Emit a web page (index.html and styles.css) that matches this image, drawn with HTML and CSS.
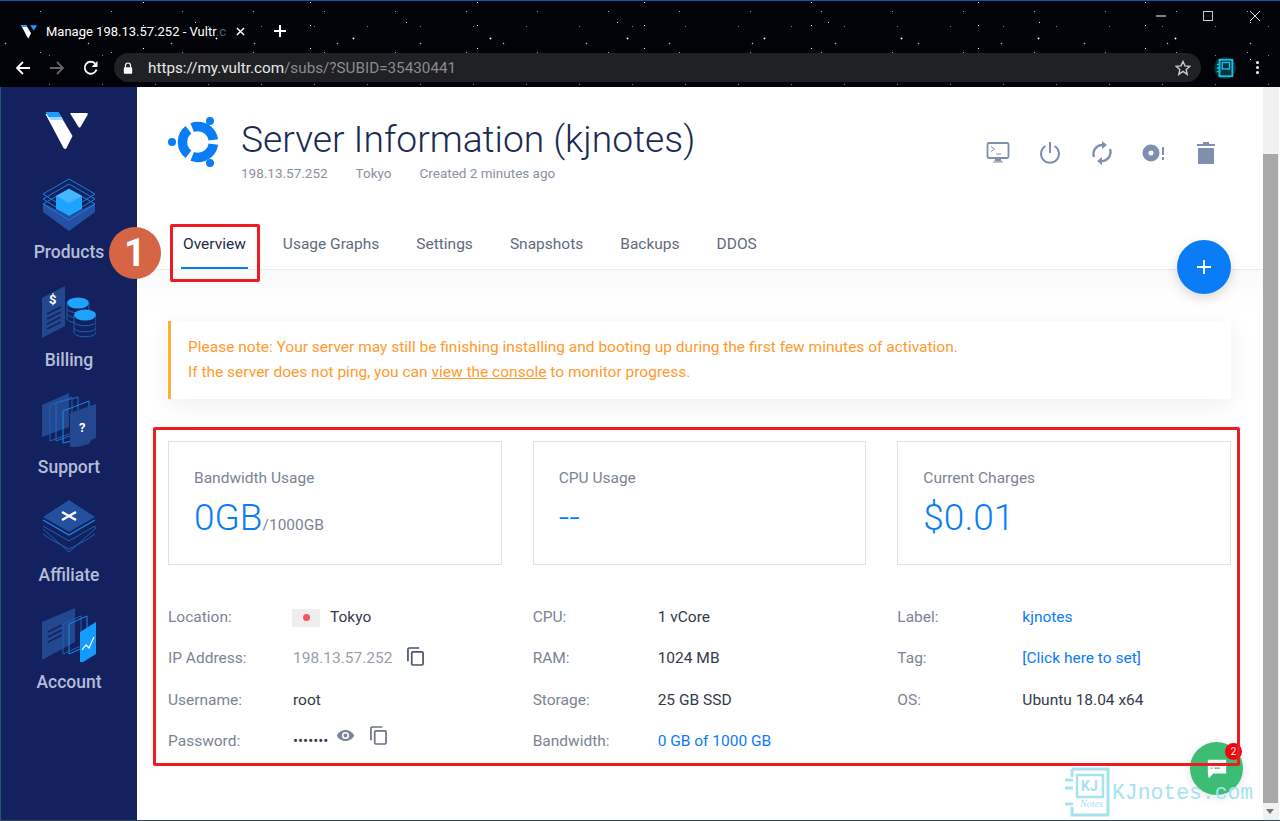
FILE: index.html
```html
<!DOCTYPE html>
<html lang="en">
<head>
    <meta charset="UTF-8">
    <meta name="viewport" content="width=device-width, initial-scale=1.0">
    <title>Manage 198.13.57.252 - Vultr.com</title>
    <link rel="stylesheet" href="styles.css">
</head>
<body>
<div class="window">
    <div class="chrome">
        <div class="tab-row">
            <svg class="favicon" viewBox="0 0 43 38"><path d="M0 2h14l13 22-6 12q-1 2-3 0z" fill="#fff"/><path d="M0 2h14l3 5H3z" fill="#1e9bff"/><path d="M25 2h16q2 0 1 2l-7 11q-1 1-2 0L25 3z" fill="#1e9bff"/></svg>
            <span class="tab-title">Manage 198.13.57.252 - Vultr<span class="fade">.c</span></span>
            <svg class="tab-close" viewBox="0 0 10 10"><path d="M1 1l8 8M9 1l-8 8" stroke="#fff" stroke-width="1.6"/></svg>
            <svg class="tab-new" viewBox="0 0 14 14"><path d="M7 1v12M1 7h12" stroke="#fff" stroke-width="2"/></svg>
            <div class="win-btns">
                <svg viewBox="0 0 12 12"><path d="M1 6h10" stroke="#fff"/></svg>
                <svg viewBox="0 0 12 12"><rect x="1.5" y="1.5" width="9" height="9" fill="none" stroke="#ccc"/></svg>
                <svg viewBox="0 0 12 12"><path d="M1 1l10 10M11 1L1 11" stroke="#ddd"/></svg>
            </div>
        </div>
        <div class="addr-row">
            <svg class="nav-arrow" viewBox="0 0 16 16"><path d="M15 8H2M8 2L2 8l6 6" fill="none" stroke="#fff" stroke-width="1.8"/></svg>
            <svg class="nav-arrow" viewBox="0 0 16 16"><path d="M1 8h13M8 2l6 6-6 6" fill="none" stroke="#666" stroke-width="1.8"/></svg>
            <svg class="nav-arrow" viewBox="0 0 16 16"><path d="M13.5 9.5A6 6 0 1 1 12 3.5" fill="none" stroke="#fff" stroke-width="1.8"/><path d="M14.5 1v6h-6z" fill="#fff"/></svg>
            <div class="addr-bar">
                <svg class="lock" viewBox="0 0 12 14"><path d="M3 6V4a3 3 0 0 1 6 0v2" fill="none" stroke="#fff" stroke-width="1.4"/><rect x="1" y="6" width="10" height="8" rx="1" fill="#fff"/></svg>
                <span class="url"><b>https://my.vultr.com</b>/subs/?SUBID=35430441</span>
                <svg class="star" viewBox="0 0 16 16"><path d="M8 1.5l2 4.4 4.7.5-3.5 3.2 1 4.7L8 11.4l-4.2 2.9 1-4.7L1.3 6.4 6 5.900z" fill="none" stroke="#ccc" stroke-width="1.400"/></svg>
            </div>
            <svg class="ext" viewBox="0 0 24 24"><circle cx="12" cy="12" r="12" fill="#06303c"/><rect x="6" y="3" width="14" height="18" fill="none" stroke="#13c3e6" stroke-width="2"/><rect x="9" y="6" width="8" height="7" fill="none" stroke="#13c3e6" stroke-width="1.500"/><path d="M3 8h4M3 12h4M3 16h4" stroke="#13c3e6" stroke-width="1.500"/></svg>
            <div class="menu-dots"><i></i><i></i><i></i></div>
        </div>
    </div>

    <div class="main">
        <nav class="sidebar">
            <svg class="logo" viewBox="0 0 43 38"><path d="M0 2h14l13 22-6 12q-1 2-3 0z" fill="#fff"/><path d="M0 0h13l3 5H3z" fill="#1e9bff"/><path d="M3 5h13l1.500 3H5z" fill="#a8d4ff"/><path d="M25 1h16q2 0 1 2l-7 12q-1 1-2 0L25 2z" fill="#fff"/></svg>
            <a class="nav-item">
                <svg viewBox="0 0 54 56"><path d="M1 36v-9l26 13 26-13v9L27 55z" fill="#2451a3"/><path d="M27 3l26 15-26 16L1 18z" fill="none" stroke="#1b7fd8"/><path d="M27 8l26 15-26 16L1 23z" fill="none" stroke="#1b7fd8"/><path d="M27 13l26 15-26 16L1 28z" fill="none" stroke="#1b7fd8"/><path d="M27 13l13 7v13l-13 7-13-7V20z" fill="#1ea4ff"/><path d="M27 13l13 7-13 7-13-7z" fill="#45b6ff"/></svg>
                <span>Products</span>
            </a>
            <a class="nav-item">
                <svg viewBox="0 0 54 56"><path d="M0 14l23-12v40L0 54z" fill="#24488f"/><path d="M5 30l14-7M5 35l14-7M5 40l14-7M5 45l14-7" stroke="#14215f" stroke-width="1.500"/><text x="7" y="20" class="doc-mark">$</text><ellipse cx="36" cy="19" rx="11" ry="5.500" fill="#1ea4ff"/><path d="M25 19v16c2 5 20 5 22 0V19" fill="none" stroke="#1d5fb0"/><path d="M25 25c2 5 20 5 22 0M25 30c2 5 20 5 22 0" fill="none" stroke="#1d5fb0"/><path d="M32 31v18c2 5 20 5 22 0V31" fill="#14215f" stroke="#1d5fb0"/><path d="M32 38c2 5 20 5 22 0M32 44c2 5 20 5 22 0" fill="none" stroke="#1d5fb0"/><ellipse cx="43" cy="31" rx="11" ry="5.500" fill="#1ea4ff"/></svg>
                <span>Billing</span>
            </a>
            <a class="nav-item">
                <svg viewBox="0 0 54 56"><path d="M0 14l27-12v34L0 46z" fill="#24488f"/><path d="M8 14l22-8v36L8 50z" fill="none" stroke="#1d5fb0"/><path d="M14 12l22-6v36l-22 8z" fill="none" stroke="#1b6fc8"/><path d="M21 20l26-10v36l-26 6z" fill="none" stroke="#1a8be6"/><path d="M28 22l26-9v34l-5 2-2 4-19 5z" fill="#24488f"/><text x="37" y="41" class="doc-mark">?</text></svg>
                <span>Support</span>
            </a>
            <a class="nav-item">
                <svg viewBox="0 0 54 56"><path d="M1 27l26 15 26-15v3L27 53 1 30" fill="none" stroke="#1d5fb0"/><path d="M1 35c8 6 18 11 26 15 8-4 18-9 26-15" fill="none" stroke="#1d5fb0"/><path d="M1 21l26 15 26-15" fill="none" stroke="#1b8be8" stroke-width="1.400"/><path d="M27 1l26 17-26 15L1 18z" fill="#24509f"/><path d="M20 13l14 8M34 13l-14 8" stroke="#fff" stroke-width="2.500"/></svg>
                <span>Affiliate</span>
            </a>
            <a class="nav-item">
                <svg viewBox="0 0 54 56"><path d="M0 16l33-14v34L0 54z" fill="#24488f"/><path d="M6 26l14-7M6 31l14-7M6 36l14-7" stroke="#14215f" stroke-width="1.500"/><path d="M21 18l18-8v30l-18 8z" fill="none" stroke="#1d5fb0"/><path d="M27 18l18-8v30l-18 8z" fill="none" stroke="#1b8be8"/><path d="M38 26l16-10v32l-16 10z" fill="#149bff"/><path d="M40 44l4-5 3 3 5-11" fill="none" stroke="#fff" stroke-width="1.200"/></svg>
                <span>Account</span>
            </a>
        </nav>

        <main class="content">
            <header class="server-head">
                <svg class="ubuntu" viewBox="0 0 50 52">
                    <circle cx="30" cy="26" r="15.500" pathLength="360" fill="none" stroke="#0a7cf5" stroke-width="9.500" stroke-dasharray="104 16" stroke-dashoffset="-8"/>
                    <circle cx="4" cy="26" r="4" fill="#0a7cf5"/>
                    <circle cx="42" cy="5" r="4" fill="#0a7cf5"/>
                    <circle cx="42" cy="47" r="4" fill="#0a7cf5"/>
                </svg>
                <div class="head-text">
                    <h1>Server Information (kjnotes)</h1>
                    <div class="head-meta"><span>198.13.57.252</span><span>Tokyo</span><span>Created 2 minutes ago</span></div>
                </div>
                <div class="head-actions">
                    <svg viewBox="0 0 24 24"><rect x="1.500" y="2" width="21" height="15" rx="1.500" fill="none" stroke="#7f8fb0" stroke-width="1.800"/><path d="M5 5.500l3.500 2.500L5 10.500M10 13h5" fill="none" stroke="#7f8fb0"/><path d="M10 17h4l1 3h-6zM7 21h10" fill="#7f8fb0" stroke="#7f8fb0"/></svg>
                    <svg viewBox="0 0 24 24"><path d="M7.500 5a9 9 0 1 0 9 0M12 1v11" fill="none" stroke="#7f8fb0" stroke-width="2"/></svg>
                    <svg viewBox="0 0 24 24"><path d="M4 16A9 9 0 0 1 13 4M20 8a9 9 0 0 1-9 12" fill="none" stroke="#7f8fb0" stroke-width="2.400"/><path d="M12 0l5 4-5 4zM12 16l-5 4 5 4z" fill="#7f8fb0"/></svg>
                    <svg viewBox="0 0 24 24"><circle cx="9" cy="12" r="5.500" fill="none" stroke="#7f8fb0" stroke-width="6"/><path d="M21 6v8M21 16v3" stroke="#7f8fb0" stroke-width="2"/></svg>
                    <svg viewBox="0 0 24 24"><path d="M4 7h16v16H4zM3 3h18v2H3zM9 1h6v2H9z" fill="#7f8fb0"/></svg>
                </div>
            </header>

            <ul class="tabs">
                <li class="active">Overview</li>
                <li>Usage Graphs</li>
                <li>Settings</li>
                <li>Snapshots</li>
                <li>Backups</li>
                <li>DDOS</li>
            </ul>

            <div class="page">
                <div class="notice">
                    <p>Please note: Your server may still be finishing installing and booting up during the first few minutes of activation.</p>
                    <p>If the server does not ping, you can <a>view the console</a> to monitor progress.</p>
                </div>

                <div class="cards">
                    <div class="card"><div class="card-label">Bandwidth Usage</div><div class="card-value">0GB<small>/1000GB</small></div></div>
                    <div class="card"><div class="card-label">CPU Usage</div><div class="card-value">--</div></div>
                    <div class="card"><div class="card-label">Current Charges</div><div class="card-value">$0.01</div></div>
                </div>

                <div class="details">
                    <dl>
                        <dt>Location:</dt><dd><span class="flag"><i></i></span>Tokyo</dd>
                        <dt>IP Address:</dt><dd class="muted">198.13.57.252<svg class="copy" viewBox="0 0 18 20"><path d="M13 1H2.500A1.500 1.500 0 0 0 1 2.500V15" fill="none" stroke="#4a5468" stroke-width="1.800"/><rect x="5" y="5" width="12" height="14" rx="1.200" fill="none" stroke="#4a5468" stroke-width="1.800"/></svg></dd>
                        <dt>Username:</dt><dd>root</dd>
                        <dt>Password:</dt><dd class="pass"><span class="dots">•••••••</span><svg class="eye" viewBox="0 0 24 16"><path d="M12 1C7 1 3 4 1 8c2 4 6 7 11 7s9-3 11-7c-2-4-6-7-11-7zm0 11.500a4.500 4.500 0 1 1 0-9 4.500 4.500 0 0 1 0 9zm0-7a2.500 2.500 0 1 0 0 5 2.500 2.500 0 0 0 0-5z" fill="#7d8596"/></svg><svg class="copy" viewBox="0 0 18 20"><path d="M13 1H2.500A1.500 1.500 0 0 0 1 2.500V15" fill="none" stroke="#6b7384" stroke-width="1.800"/><rect x="5" y="5" width="12" height="14" rx="1.200" fill="none" stroke="#6b7384" stroke-width="1.800"/></svg></dd>
                    </dl>
                    <dl>
                        <dt>CPU:</dt><dd>1 vCore</dd>
                        <dt>RAM:</dt><dd>1024 MB</dd>
                        <dt>Storage:</dt><dd>25 GB SSD</dd>
                        <dt>Bandwidth:</dt><dd class="link">0 GB of 1000 GB</dd>
                    </dl>
                    <dl>
                        <dt>Label:</dt><dd class="link">kjnotes</dd>
                        <dt>Tag:</dt><dd class="link">[Click here to set]</dd>
                        <dt>OS:</dt><dd>Ubuntu 18.04 x64</dd>
                    </dl>
                </div>
            </div>
        </main>

        <div class="scrollbar">
            <div class="scroll-thumb"></div>
            <i class="scroll-arrow"></i>
        </div>
    </div>

    <div class="fab"><svg viewBox="0 0 16 16"><path d="M8 1v14M1 8h14" stroke="#fff" stroke-width="1.800"/></svg></div>
    <div class="chat">
        <svg viewBox="0 0 24 24"><path d="M2 2h20v15H8l-5 5-1-5z" fill="#fff"/><path d="M5 7h2M9 7h9M5 11h2M9 11h6" stroke="#3dbd73" stroke-width="1.500"/></svg>
        <span class="chat-badge">2</span>
    </div>
    <div class="mark-box mark-tab"></div>
    <div class="mark-box mark-info"></div>
    <div class="callout">1</div>
    <div class="watermark">
        <svg viewBox="0 0 46 50"><path d="M8 2h36v46H8v-8M8 2v8" fill="none" stroke="#a5e3ef" stroke-width="3"/><rect x="13" y="8" width="26" height="22" fill="none" stroke="#a5e3ef" stroke-width="2.500"/><path d="M1 13h8M1 21h8M1 37h8" stroke="#a5e3ef" stroke-width="3"/></svg>
        <span class="wm-kj">KJ</span>
        <span class="wm-notes">Notes</span>
        <span class="wm-text">KJnotes.com</span>
    </div>
</div>
</body>
</html>
```

FILE: styles.css
```css
* {
    margin: 0;
    padding: 0;
    box-sizing: border-box;
}
body {
    font-family: Roboto, "Liberation Sans", sans-serif;
    background: #fff;
    overflow: hidden;
}
.window {
    position: relative;
    width: 1280px;
    height: 821px;
    display: flex;
    flex-direction: column;
    border-bottom: 1px solid #33475b;
    overflow: hidden;
}

/* browser chrome */
.chrome {
    height: 87px;
    flex-shrink: 0;
    border-top: 1px solid #0b5aa5;
    background-color: #020308;
    background-image:
        radial-gradient(circle, #fff 0.7px, transparent 1.2px),
        radial-gradient(circle, #9fc0e8 0.6px, transparent 1.1px),
        radial-gradient(circle, #d8e6ff 0.6px, transparent 1px),
        radial-gradient(circle, #5f86b8 0.6px, transparent 1px),
        radial-gradient(circle, #7fa3d0 0.5px, transparent 1px),
        radial-gradient(circle, #fff 0.5px, transparent 1px);
    background-size: 137px 61px, 83px 47px, 211px 37px, 53px 29px, 71px 41px, 167px 23px;
    background-position: 11px 7px, 47px 19px, 90px 3px, 23px 11px, 5px 31px, 60px 13px;
}
.tab-row {
    position: relative;
    height: 52px;
    display: flex;
    align-items: center;
    padding: 8px 0 0 21px;
    color: #fff;
}
.favicon {
    width: 16px;
    height: 15px;
}
.tab-title {
    font-size: 13px;
    margin-left: 9px;
    width: 180px;
    white-space: nowrap;
}
.fade {
    opacity: 0.35;
}
.tab-close {
    width: 9px;
    height: 9px;
    margin-left: 10px;
}
.tab-new {
    width: 14px;
    height: 14px;
    margin-left: 28px;
}
.win-btns {
    position: absolute;
    top: 9px;
    right: 19px;
    display: flex;
    gap: 35px;
}
.win-btns svg {
    width: 12px;
    height: 12px;
}
.addr-row {
    height: 29px;
    display: flex;
    align-items: center;
    padding-left: 15px;
}
.nav-arrow {
    width: 16px;
    height: 16px;
    margin-right: 18px;
}
.addr-bar {
    width: 1087px;
    height: 29px;
    margin-left: -3px;
    background: #202124;
    border-radius: 15px;
    display: flex;
    align-items: center;
    padding: 0 10px 0 9px;
}
.lock {
    width: 10px;
    height: 12px;
}
.url {
    margin-left: 15px;
    flex: 1;
    font-size: 15.250px;
    color: #8a8b8e;
    white-space: nowrap;
}
.url b {
    font-weight: 400;
    color: #e8e8e8;
}
.star {
    width: 16px;
    height: 16px;
}
.ext {
    width: 22px;
    height: 22px;
    margin-left: 13px;
}
.menu-dots {
    margin-left: 20px;
    display: flex;
    flex-direction: column;
    gap: 2px;
}
.menu-dots i {
    width: 3px;
    height: 3px;
    background: #fff;
    border-radius: 50%;
}

/* layout */
.main {
    flex: 1;
    display: flex;
    min-height: 0;
}
.sidebar {
    width: 137px;
    flex-shrink: 0;
    background: #14215f;
    border-left: 1px solid #1f5a6e;
    display: flex;
    flex-direction: column;
    align-items: center;
    padding-top: 25px;
}
.logo {
    width: 44px;
    height: 38px;
    margin: 0 4px 26px 0;
}
.nav-item {
    height: 107.5px;
    display: flex;
    flex-direction: column;
    align-items: center;
    gap: 10px;
    font-size: 17.500px;
    font-weight: 500;
    color: #b5bdd8;
    line-height: 20px;
}
.nav-item svg {
    width: 54px;
    height: 56px;
}
.doc-mark {
    font-size: 13px;
    font-weight: 700;
    fill: #fff;
}
.content {
    flex: 1;
    min-width: 0;
    background: #fff;
}
.server-head {
    height: 137px;
    padding: 29px 32px 0 31px;
    display: flex;
    align-items: flex-start;
}
.ubuntu {
    width: 50px;
    height: 52px;
    flex-shrink: 0;
}
.head-text {
    flex: 1;
    margin-left: 23px;
}
h1 {
    font-size: 37.200px;
    font-weight: 300;
    line-height: 44px;
    color: #1a2a55;
    margin-top: 1px;
}
.head-meta {
    display: flex;
    gap: 28px;
    font-size: 13.5px;
    color: #8a919f;
    margin-top: 4px;
}
.head-actions {
    display: flex;
    gap: 28px;
    margin-top: 25px;
    margin-right: 13px;
}
.head-actions svg {
    width: 24px;
    height: 24px;
}
.tabs {
    list-style: none;
    display: flex;
    gap: 37px;
    padding-left: 46px;
    height: 46px;
    border-bottom: 1px solid #e9ecef;
    font-size: 15.500px;
    line-height: 40px;
    color: #5f6b7c;
}
.tabs li {
    height: 45px;
}
.tabs .active {
    color: #1c2b4a;
    position: relative;
}
.tabs .active::after {
    content: "";
    position: absolute;
    left: -2px;
    right: -2px;
    bottom: 0;
    height: 2px;
    background: #0a7cf5;
}
.page {
    padding: 51px 32px 0 31px;
    background: linear-gradient(#fafafa, #fff 40px);
}
.notice {
    height: 78px;
    border-left: 3px solid #ffb02e;
    background: #fff;
    box-shadow: 0 6px 24px rgba(0, 0, 0, 0.07);
    padding: 14px 0 0 17px;
    font-size: 15.500px;
    line-height: 25px;
    color: #ff9a2e;
}
.notice a {
    text-decoration: underline;
}
.cards {
    display: grid;
    grid-template-columns: repeat(3, 1fr);
    gap: 31px;
    margin-top: 42px;
}
.card {
    height: 124px;
    border: 1px solid #dfe2e6;
    padding: 27px 25px 0;
}
.card-label {
    font-size: 15.500px;
    line-height: 18px;
    color: #7b8494;
}
.card-value {
    font-size: 37px;
    font-weight: 300;
    line-height: 44px;
    margin-top: 9px;
    color: #0a7cf5;
}
.card-value small {
    font-size: 15.500px;
    font-weight: 400;
    color: #7b8494;
}
.details {
    display: grid;
    grid-template-columns: repeat(3, 1fr);
    gap: 31px;
    margin-top: 32px;
}
.details dl {
    display: grid;
    grid-template-columns: 125px 1fr;
    grid-auto-rows: 41.300px;
    font-size: 15.500px;
    line-height: 41px;
}
.details dt {
    color: #7b8494;
}
.details dd {
    color: #333b4a;
    display: flex;
    align-items: center;
}
.details .muted {
    color: #9aa0ab;
}
.details .link {
    color: #0a7cf5;
}
.flag {
    width: 28px;
    height: 18px;
    background: #eeeeee;
    display: flex;
    align-items: center;
    justify-content: center;
    margin: 0 10px 0 -1px;
}
.flag i {
    width: 7px;
    height: 7px;
    border-radius: 50%;
    background: #f8545f;
}
.copy {
    width: 17px;
    height: 19px;
    margin: -4px 0 0 15px;
}
.pass .copy {
    margin-left: 15px;
    margin-top: -13px;
}
.eye {
    width: 19px;
    height: 13px;
    margin: -12px 0 0 8px;
}
.dots {
    font-size: 15px;
}
.scrollbar {
    position: relative;
    width: 17px;
    flex-shrink: 0;
    background: #f1f1f1;
    border-right: 1px solid #fff;
}
.scroll-thumb {
    position: absolute;
    top: 67px;
    left: 0;
    width: 15px;
    height: 649px;
    background: #a8a8a8;
}
.scroll-arrow {
    position: absolute;
    left: 3px;
    bottom: 6px;
    border: 4px solid transparent;
    border-top: 5px solid #777;
    border-bottom: 0;
}

/* things lying over the page */
.mark-box {
    position: absolute;
    border: 3px solid #ed1c24;
    border-radius: 2px;
}
.mark-tab {
    left: 170px;
    top: 224px;
    width: 90px;
    height: 58px;
}
.mark-info {
    left: 153px;
    top: 427px;
    width: 1087px;
    height: 339px;
}
.callout {
    position: absolute;
    left: 109px;
    top: 227px;
    width: 52px;
    height: 52px;
    border-radius: 50%;
    background: #d56544;
    color: #fff;
    font-family: Roboto, sans-serif;
    font-size: 38px;
    font-weight: 700;
    line-height: 52px;
    text-align: center;
}
.fab {
    position: absolute;
    left: 1177px;
    top: 240px;
    width: 54px;
    height: 54px;
    border-radius: 50%;
    background: #0a7cf5;
    box-shadow: 0 4px 12px rgba(0, 0, 0, 0.15);
    display: flex;
    align-items: center;
    justify-content: center;
}
.fab svg {
    width: 16px;
    height: 16px;
}
.watermark {
    position: absolute;
    left: 1064px;
    top: 767px;
    width: 192px;
    height: 50px;
    color: #a5e3ef;
}
.watermark svg {
    position: absolute;
    left: 0;
    top: 0;
    width: 46px;
    height: 50px;
}
.wm-kj {
    position: absolute;
    left: 17px;
    top: 11px;
    font-size: 14px;
    font-weight: 700;
    line-height: 16px;
}
.wm-notes {
    position: absolute;
    left: 16px;
    top: 31px;
    font-family: "Liberation Serif", serif;
    font-size: 10px;
    font-style: italic;
    line-height: 12px;
}
.wm-text {
    position: absolute;
    left: 48px;
    top: 14px;
    font-family: "Liberation Mono", monospace;
    font-size: 21.400px;
    line-height: 24px;
}
.chat {
    position: absolute;
    left: 1190px;
    top: 742px;
    width: 53px;
    height: 53px;
    border-radius: 50%;
    background: #3dbd73;
    box-shadow: 0 2px 10px rgba(0, 0, 0, 0.12);
    display: flex;
    align-items: center;
    justify-content: center;
}
.chat svg {
    width: 22px;
    height: 22px;
}
.chat-badge {
    position: absolute;
    right: 1px;
    top: 1px;
    width: 17px;
    height: 17px;
    border-radius: 50%;
    background: #f5000f;
    color: #fff;
    font-size: 10px;
    line-height: 17px;
    text-align: center;
}
```
